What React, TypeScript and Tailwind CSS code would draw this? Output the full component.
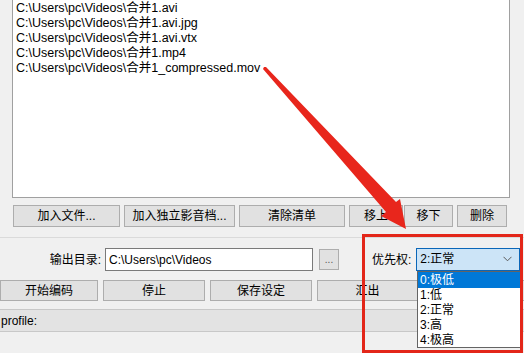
import React from 'react';

const files = [
    'C:\\Users\\pc\\Videos\\合并1.avi',
    'C:\\Users\\pc\\Videos\\合并1.avi.jpg',
    'C:\\Users\\pc\\Videos\\合并1.avi.vtx',
    'C:\\Users\\pc\\Videos\\合并1.mp4',
    'C:\\Users\\pc\\Videos\\合并1_compressed.mov',
];

const priorities = ['0:极低', '1:低', '2:正常', '3:高', '4:极高'];

const btn = 'h-full bg-[#e1e1e1] border border-[#adadad] text-[12px] text-black flex items-center justify-center shrink-0';

const Chevron = () => (
    <svg width="9" height="6" viewBox="0 0 9 6" fill="none" stroke="#5a5a5a" strokeWidth="1">
        <path d="M0.5 0.8L4.5 4.8L8.5 0.8" />
    </svg>
);

export default function App() {
    return (
        <div
            className="relative w-[524px] h-[353px] overflow-hidden bg-[#f0f0f0] text-black"
            style={{ fontFamily: '"Liberation Sans", "Noto Sans CJK SC", sans-serif' }}
        >
            {/* file list */}
            <div className="ml-[12px] w-[498px] h-[198px] bg-white border border-t-0 border-[#a0a0a0] pl-[3px] pt-[1px] text-[12.5px] leading-[15px]">
                {files.map((f) => (
                    <div key={f} className="whitespace-nowrap">{f}</div>
                ))}
            </div>

            {/* list buttons */}
            <div className="flex h-[22px] mt-[7px] ml-[13px]">
                <button className={`${btn} w-[107px]`}>加入文件...</button>
                <button className={`${btn} w-[111px] ml-[4px]`}>加入独立影音档...</button>
                <button className={`${btn} w-[106px] ml-[4px]`}>清除清单</button>
                <button className={`${btn} w-[54px] ml-[4px]`}>移上</button>
                <button className={`${btn} w-[49px] ml-[1px]`}>移下</button>
                <button className={`${btn} w-[50px] ml-[4px]`}>删除</button>
            </div>

            <div className="mt-[10px] border-t border-[#dadada]" />

            {/* output dir + priority */}
            <div className="flex items-center h-[23px] mt-[10px] text-[12px]">
                <div className="w-[101px] text-right shrink-0">输出目录:</div>
                <div className="ml-[4px] w-[208px] h-[23px] bg-white border border-[#7a7a7a] flex items-center pl-[3px] whitespace-nowrap shrink-0">
                    C:\Users\pc\Videos
                </div>
                <button className="ml-[6px] w-[20px] h-[21px] bg-[#e1e1e1] border border-[#adadad] text-[10px] text-[#555] flex items-center justify-center shrink-0">
                    ...
                </button>
                <div className="ml-[33px] shrink-0">优先权:</div>
                <div className="ml-[5px] w-[104px] h-[23px] -mt-[1px] bg-[#cce4f7] border border-[#0a66b8] flex items-center justify-between pl-[3px] pr-[7px] shrink-0">
                    <span>2:正常</span>
                    <Chevron />
                </div>
            </div>

            {/* action buttons */}
            <div className="flex h-[21px] mt-[9px]">
                <button className={`${btn} w-[98px]`}>开始编码</button>
                <button className={`${btn} w-[102px] ml-[5px]`}>停止</button>
                <button className={`${btn} w-[102px] ml-[5px]`}>保存设定</button>
                <button className={`${btn} w-[101px] ml-[5px]`}>汇出</button>
                <button className={`${btn} w-[102px] ml-[5px]`}>&nbsp;</button>
            </div>

            {/* profile bar */}
            <div className="mt-[8px] h-[23px] bg-[#e3e3e3] border-y border-[#c8c8c8] flex items-center pl-[1px] text-[12px]">
                profile:
            </div>

            {/* open dropdown list */}
            <div className="absolute left-[417px] top-[271px] w-[104px] h-[77px] bg-white border border-[#646464] text-[12px] leading-[15px]">
                {priorities.map((p, i) => (
                    <div
                        key={p}
                        className={i === 0 ? 'bg-[#0078d7] text-white pl-[2px] h-[16px] leading-[16px]' : 'pl-[2px] h-[15px]'}
                    >
                        {p}
                    </div>
                ))}
            </div>

            {/* annotation: red box */}
            <div className="absolute left-[362px] top-[234px] w-[161px] h-[119px] border-[3px] border-[#e32619] pointer-events-none" />

            {/* annotation: red arrow */}
            <svg className="absolute left-0 top-0 pointer-events-none" width="524" height="353" viewBox="0 0 524 353">
                <polygon
                    fill="#e8261c"
                    points="264,67 266,67 396,202 400,199 406,229 381,216 386,212 263,69"
                />
            </svg>
        </div>
    );
}
